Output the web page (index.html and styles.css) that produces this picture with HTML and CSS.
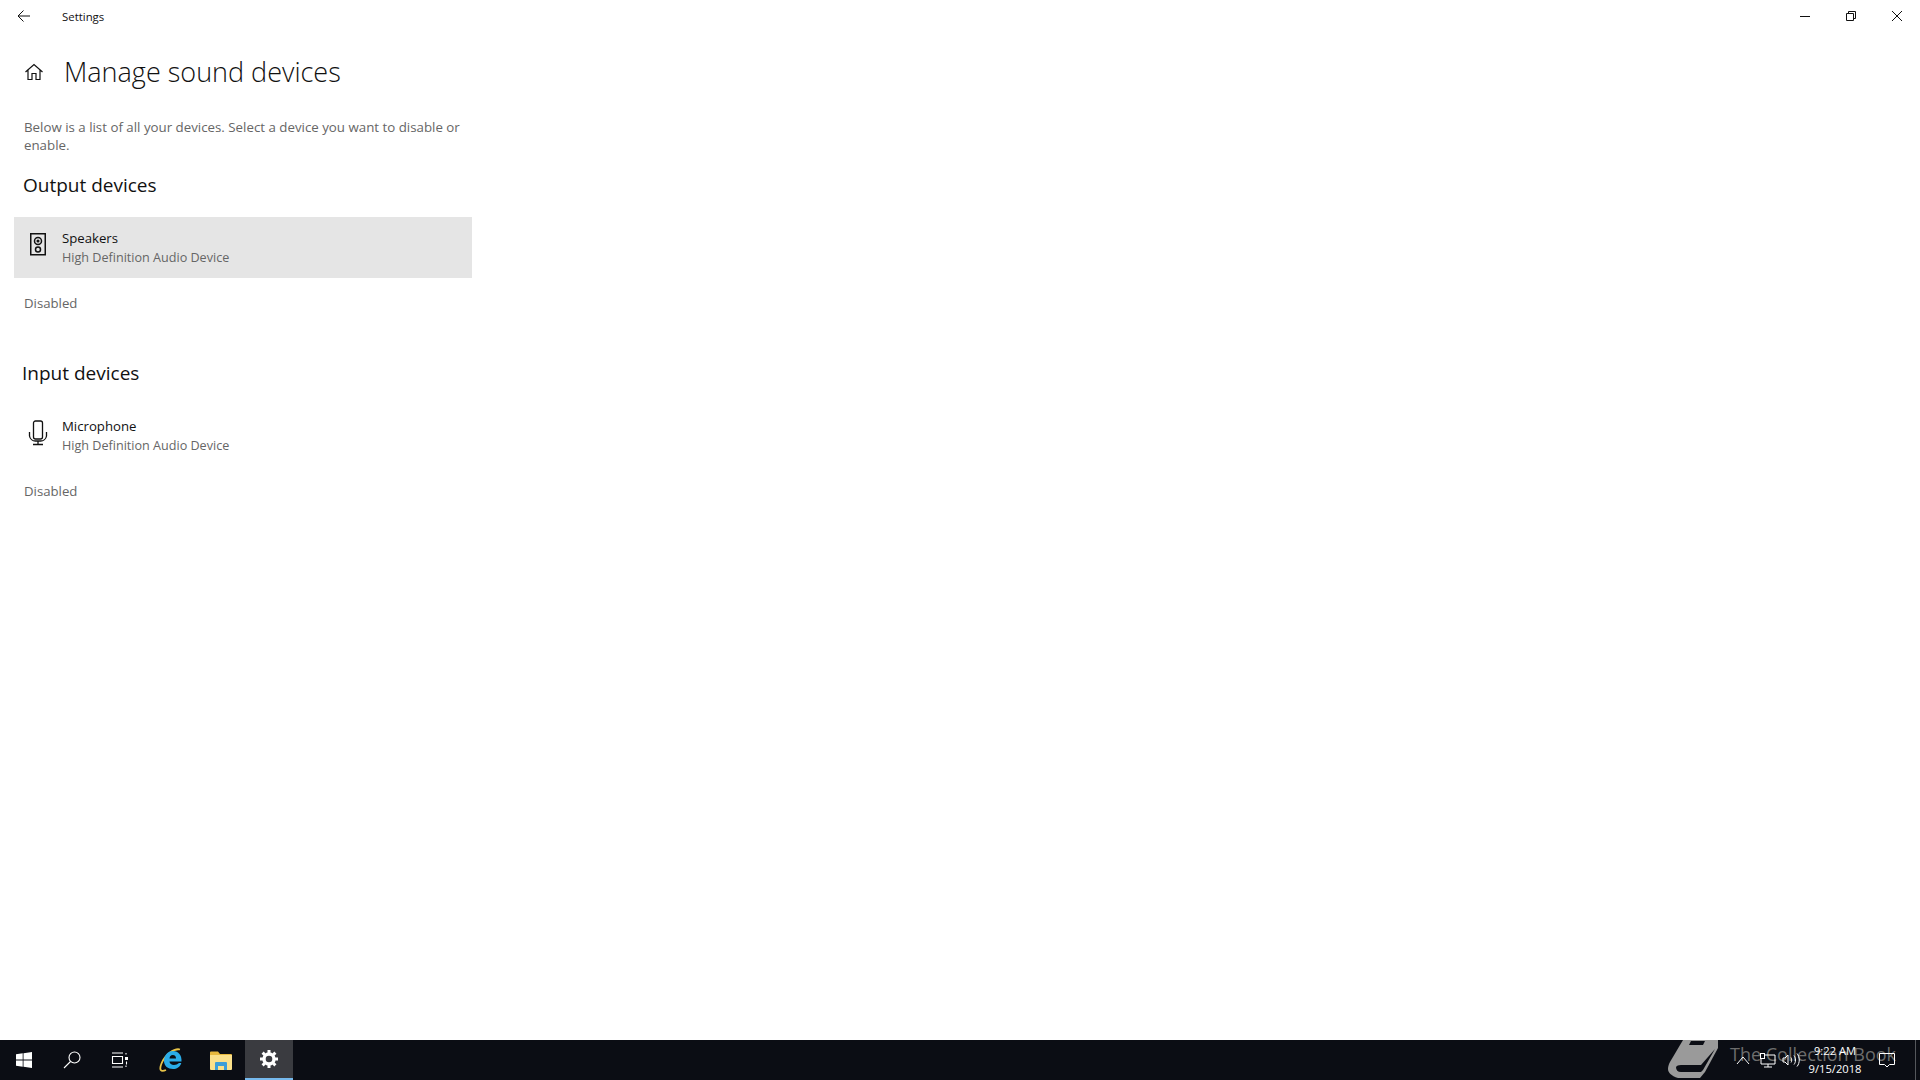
FILE: index.html
```html
<!DOCTYPE html>
<html lang="en">
<head>
  <meta charset="UTF-8">
  <title>Settings</title>
  <link rel="stylesheet" href="styles.css">
</head>
<body>

  <!-- Title bar -->
  <div class="titlebar">
    <div class="back-btn">
      <svg width="16" height="16" viewBox="0 0 16 16" fill="none" stroke="#111" stroke-width="1"><path d="M14 8H2.500M7.500 2.500 2 8l5.500 5.500"/></svg>
    </div>
    <div class="app-name">Settings</div>
    <div class="window-btns">
      <div class="window-btn"><svg width="12" height="12" viewBox="0 0 12 12" stroke="#111" fill="none"><path d="M1 6.500h10"/></svg></div>
      <div class="window-btn"><svg width="12" height="12" viewBox="0 0 12 12" stroke="#111" fill="none"><path d="M1.500 3.500h7v7h-7zM3.500 3.500v-2h7v7h-2"/></svg></div>
      <div class="window-btn"><svg width="12" height="12" viewBox="0 0 12 12" stroke="#111" fill="none"><path d="M1 1l10 10M11 1 1 11"/></svg></div>
    </div>
  </div>

  <!-- Content -->
  <div class="content">
    <div class="page-header">
      <svg class="home-icon" width="20" height="20" viewBox="0 0 20 20" fill="none" stroke="#111" stroke-width="1.200"><path d="M1.500 10 10 2.500l8.500 7.500M4 8v9.500h4v-6h4v6h4V8"/></svg>
      <h1 class="page-title">Manage sound devices</h1>
    </div>

    <p class="intro">Below is a list of all your devices. Select a device you want to disable or enable.</p>

    <h2 class="section-title">Output devices</h2>
    <div class="device selected">
      <svg class="device-icon" width="20" height="24" viewBox="0 0 20 24" fill="none" stroke="#111" stroke-width="1.500"><rect x="2.750" y="1.750" width="14.500" height="21"/><circle cx="10" cy="9" r="3.500"/><circle cx="10" cy="9" r=".8"/><circle cx="10" cy="17.500" r="2.500"/></svg>
      <div class="device-text">
        <div class="device-name">Speakers</div>
        <div class="device-sub">High Definition Audio Device</div>
      </div>
    </div>
    <div class="device-status">Disabled</div>

    <h2 class="section-title input-title">Input devices</h2>
    <div class="device">
      <svg class="device-icon" width="20" height="26" viewBox="0 0 20 26" fill="none" stroke="#111" stroke-width="1.300"><rect x="5.500" y="1" width="9" height="18" rx="2"/><path d="M1.500 12v4a6 6 0 0 0 6 5h5a6 6 0 0 0 6-5v-4M10 21v3.500M5 24.500h10"/></svg>
      <div class="device-text">
        <div class="device-name">Microphone</div>
        <div class="device-sub">High Definition Audio Device</div>
      </div>
    </div>
    <div class="device-status">Disabled</div>
  </div>

  <!-- Taskbar -->
  <div class="taskbar">
    <div class="task-item">
      <svg width="16" height="16" viewBox="0 0 16 16" fill="#fff"><path d="M0 2.300 6.700 1.300v6.300H0zM7.500 1.200 16 0v7.600H7.500zM0 8.400h6.700v6.300L0 13.700zM7.500 8.400H16V16l-8.500-1.200z"/></svg>
    </div>
    <div class="task-item">
      <svg width="18" height="18" viewBox="0 0 18 18" fill="none" stroke="#fff" stroke-width="1.100"><circle cx="11.500" cy="6.500" r="5.500"/><path d="M7.500 10.500 1 17"/></svg>
    </div>
    <div class="task-item">
      <svg width="18" height="16" viewBox="0 0 18 16" fill="none" stroke="#fff" stroke-width="1.100"><path d="M1 1h11M1 15h11M1.500 4.500h10v7h-10zM15 1v1.500M15 13.500V15"/><rect x="14" y="5" width="3" height="3" fill="#fff" stroke="none"/><path d="M15.500 9.500v3"/></svg>
    </div>
    <div class="task-item ie">
      <svg width="26" height="25" viewBox="0 0 26 25" fill="none"><path d="M21 1.500C15 0 6 7 2.500 15.500c-2.500 6-1 9 4.500 6.500" stroke="#e8c349" stroke-width="1.800"/><path d="M5 13c0-5.500 3.500-10 9-10s9 4.500 8.500 10.500H10.500c0 4 6.500 4.500 9.500 1.500h2.300c-1.300 4-4.500 6-8.300 6-5 0-9-3-9-8zM10.500 10.500h6.500c0-2.300-1-3.500-3.200-3.500s-3 1.300-3.300 3.500z" fill="#2aace8" fill-rule="evenodd"/></svg>
    </div>
    <div class="task-item">
      <svg width="22" height="20" viewBox="0 0 22 20"><path d="M0 2.500A1 1 0 0 1 1 1.500h7l2 2.500h11a1 1 0 0 1 1 1V7H0z" fill="#e8b83c"/><path d="M0 5h22v14a1 1 0 0 1-1 1H1a1 1 0 0 1-1-1z" fill="#fbe08a"/><path d="M5 20v-7a1 1 0 0 1 1-1h10a1 1 0 0 1 1 1v7h-3v-4H8v4z" fill="#3c9ed8"/></svg>
    </div>
    <div class="task-item active">
      <svg width="18" height="18" viewBox="0 0 18 18" fill="none" stroke="#fff" stroke-width="3.400"><circle cx="9" cy="9" r="5"/><path stroke-width="3" d="M9 0v3M9 15v3M0 9h3M15 9h3M2.600 2.600l2.100 2.100M13.300 13.300l2.100 2.100M15.400 2.600l-2.100 2.100M4.700 13.300l-2.100 2.100"/></svg>
    </div>

    <div class="tray">
      <!-- watermark sits over the tray -->
      <div class="watermark">
        <svg width="50" height="38" viewBox="0 0 50 38"><path d="M15 0H50V8L37 32 32 38H10C3 36 0 32 0 29 0 26 1 24 2 22z" fill="#9a9a9a"/><path d="M8 27Q9 25 13 25H33L47 9 35 30 33 32H13Q8 32 8 27z" fill="#0b0d14"/><path d="M23 1H37L35 5H21z" fill="#0b0d14"/></svg>
        <span>The Collection Book</span>
      </div>
      <svg class="tray-icon caret" width="14" height="14" viewBox="0 0 14 14" fill="none" stroke="#fff"><path d="M1 11 7 4l6 7"/></svg>
      <svg class="tray-icon network" width="16" height="16" viewBox="0 0 16 16" fill="none" stroke="#fff"><path d="M1 3h14v9H1zM8 12v3M4 15h8"/><rect x="0.500" y="1.500" width="4" height="5" fill="#0b0d14"/></svg>
      <svg class="tray-icon volume" width="18" height="16" viewBox="0 0 18 16" fill="none" stroke="#fff"><path d="M1 6v4h2l3 3V3L3 6zM9 5.500c1 1.500 1 3.500 0 5M12 3.500c2 2.500 2 6.500 0 9M15 1.500c3 3.500 3 9.500 0 13"/></svg>
      <div class="clock">
        <div>9:22 AM</div>
        <div>9/15/2018</div>
      </div>
      <svg class="notify" width="16" height="16" viewBox="0 0 16 16" fill="none" stroke="#fff"><path d="M.5 1.500h15v11h-5L8 15l-2.500-2.500h-5z"/></svg>
      <div class="show-desktop"></div>
    </div>
  </div>

</body>
</html>
```
FILE: styles.css
```css
* {
  box-sizing: border-box;
}

body {
  margin: 0;
  height: 100vh;
  display: flex;
  flex-direction: column;
  overflow: hidden;
  background: #fff;
  color: #111;
  font-family: 'Open Sans', 'Noto Sans', sans-serif;
  font-size: 14px;
}

/* Title bar */
.titlebar {
  display: flex;
  align-items: center;
  height: 32px;
  flex-shrink: 0;
}

.back-btn {
  width: 48px;
  height: 32px;
  display: flex;
  align-items: center;
  justify-content: center;
}

.app-name {
  margin-left: 14px;
  font-size: 11.4px;
}

.window-btns {
  display: flex;
  margin-left: auto;
}

.window-btn {
  width: 46px;
  height: 32px;
  display: flex;
  align-items: center;
  justify-content: center;
}

/* Content */
.content {
  flex: 1;
  width: 472px;
  padding-left: 14px;
}

.page-header {
  display: flex;
  align-items: center;
  height: 44px;
  margin-top: 18px;
  padding-left: 10px;
}

.home-icon {
  margin-right: 20px;
}

.page-title {
  margin: 0;
  font-size: 27px;
  font-weight: 300;
  line-height: 44px;
}

.intro {
  margin: 24px 0 0 10px;
  font-size: 13.3px;
  line-height: 18px;
  color: #666;
}

.section-title {
  margin: 17px 0 0 9px;
  font-size: 19px;
  font-weight: 400;
  line-height: 28px;
}

.input-title {
  margin: 46px 0 0 8px;
}

.device {
  display: flex;
  margin-top: 18px;
  height: 61px;
  padding: 11px 0 0 14px;
}

.device.selected {
  background: #e5e5e5;
}

.device-icon {
  margin-top: 4px;
  flex-shrink: 0;
}

.device-text {
  margin-left: 14px;
}

.device-name {
  font-size: 13.2px;
  line-height: 20px;
  color: #111;
}

.device-sub {
  margin-top: 1px;
  font-size: 12.6px;
  line-height: 18px;
  color: #666;
}

.device-status {
  margin: 15px 0 0 10px;
  font-size: 13.2px;
  line-height: 20px;
  color: #666;
}

/* Taskbar */
.taskbar {
  display: flex;
  height: 40px;
  flex-shrink: 0;
  background: #0b0d14;
}

.task-item {
  width: 48px;
  height: 40px;
  display: flex;
  align-items: center;
  justify-content: center;
}

.task-item.ie {
  margin-left: 3px;
}

.task-item:nth-child(4), .task-item:nth-child(5) {
  width: 49px;
}

.task-item.active {
  background: #3a3b40;
  border-bottom: 2px solid #76b9ed;
}

.tray {
  position: relative;
  display: flex;
  align-items: center;
  margin-left: auto;
  padding-right: 4px;
  color: #fff;
}

.watermark {
  position: absolute;
  right: 24px;
  top: 0;
  display: flex;
  gap: 12px;
  height: 40px;
  color: #6d6d6d;
  font-size: 18px;
  line-height: 28px;
  white-space: nowrap;
}

.tray-icon {
  position: relative;
}

.caret {
  margin-right: 10px;
}

.network {
  margin-right: 6px;
}

.volume {
  margin-right: 5px;
}

.clock {
  position: relative;
  width: 60px;
  margin-right: 14px;
  font-size: 11.2px;
  line-height: 18px;
  text-align: center;
}

.notify {
  position: relative;
  margin-right: 20px;
}

.show-desktop {
  width: 1px;
  height: 40px;
  background: #55575c;
}
```
